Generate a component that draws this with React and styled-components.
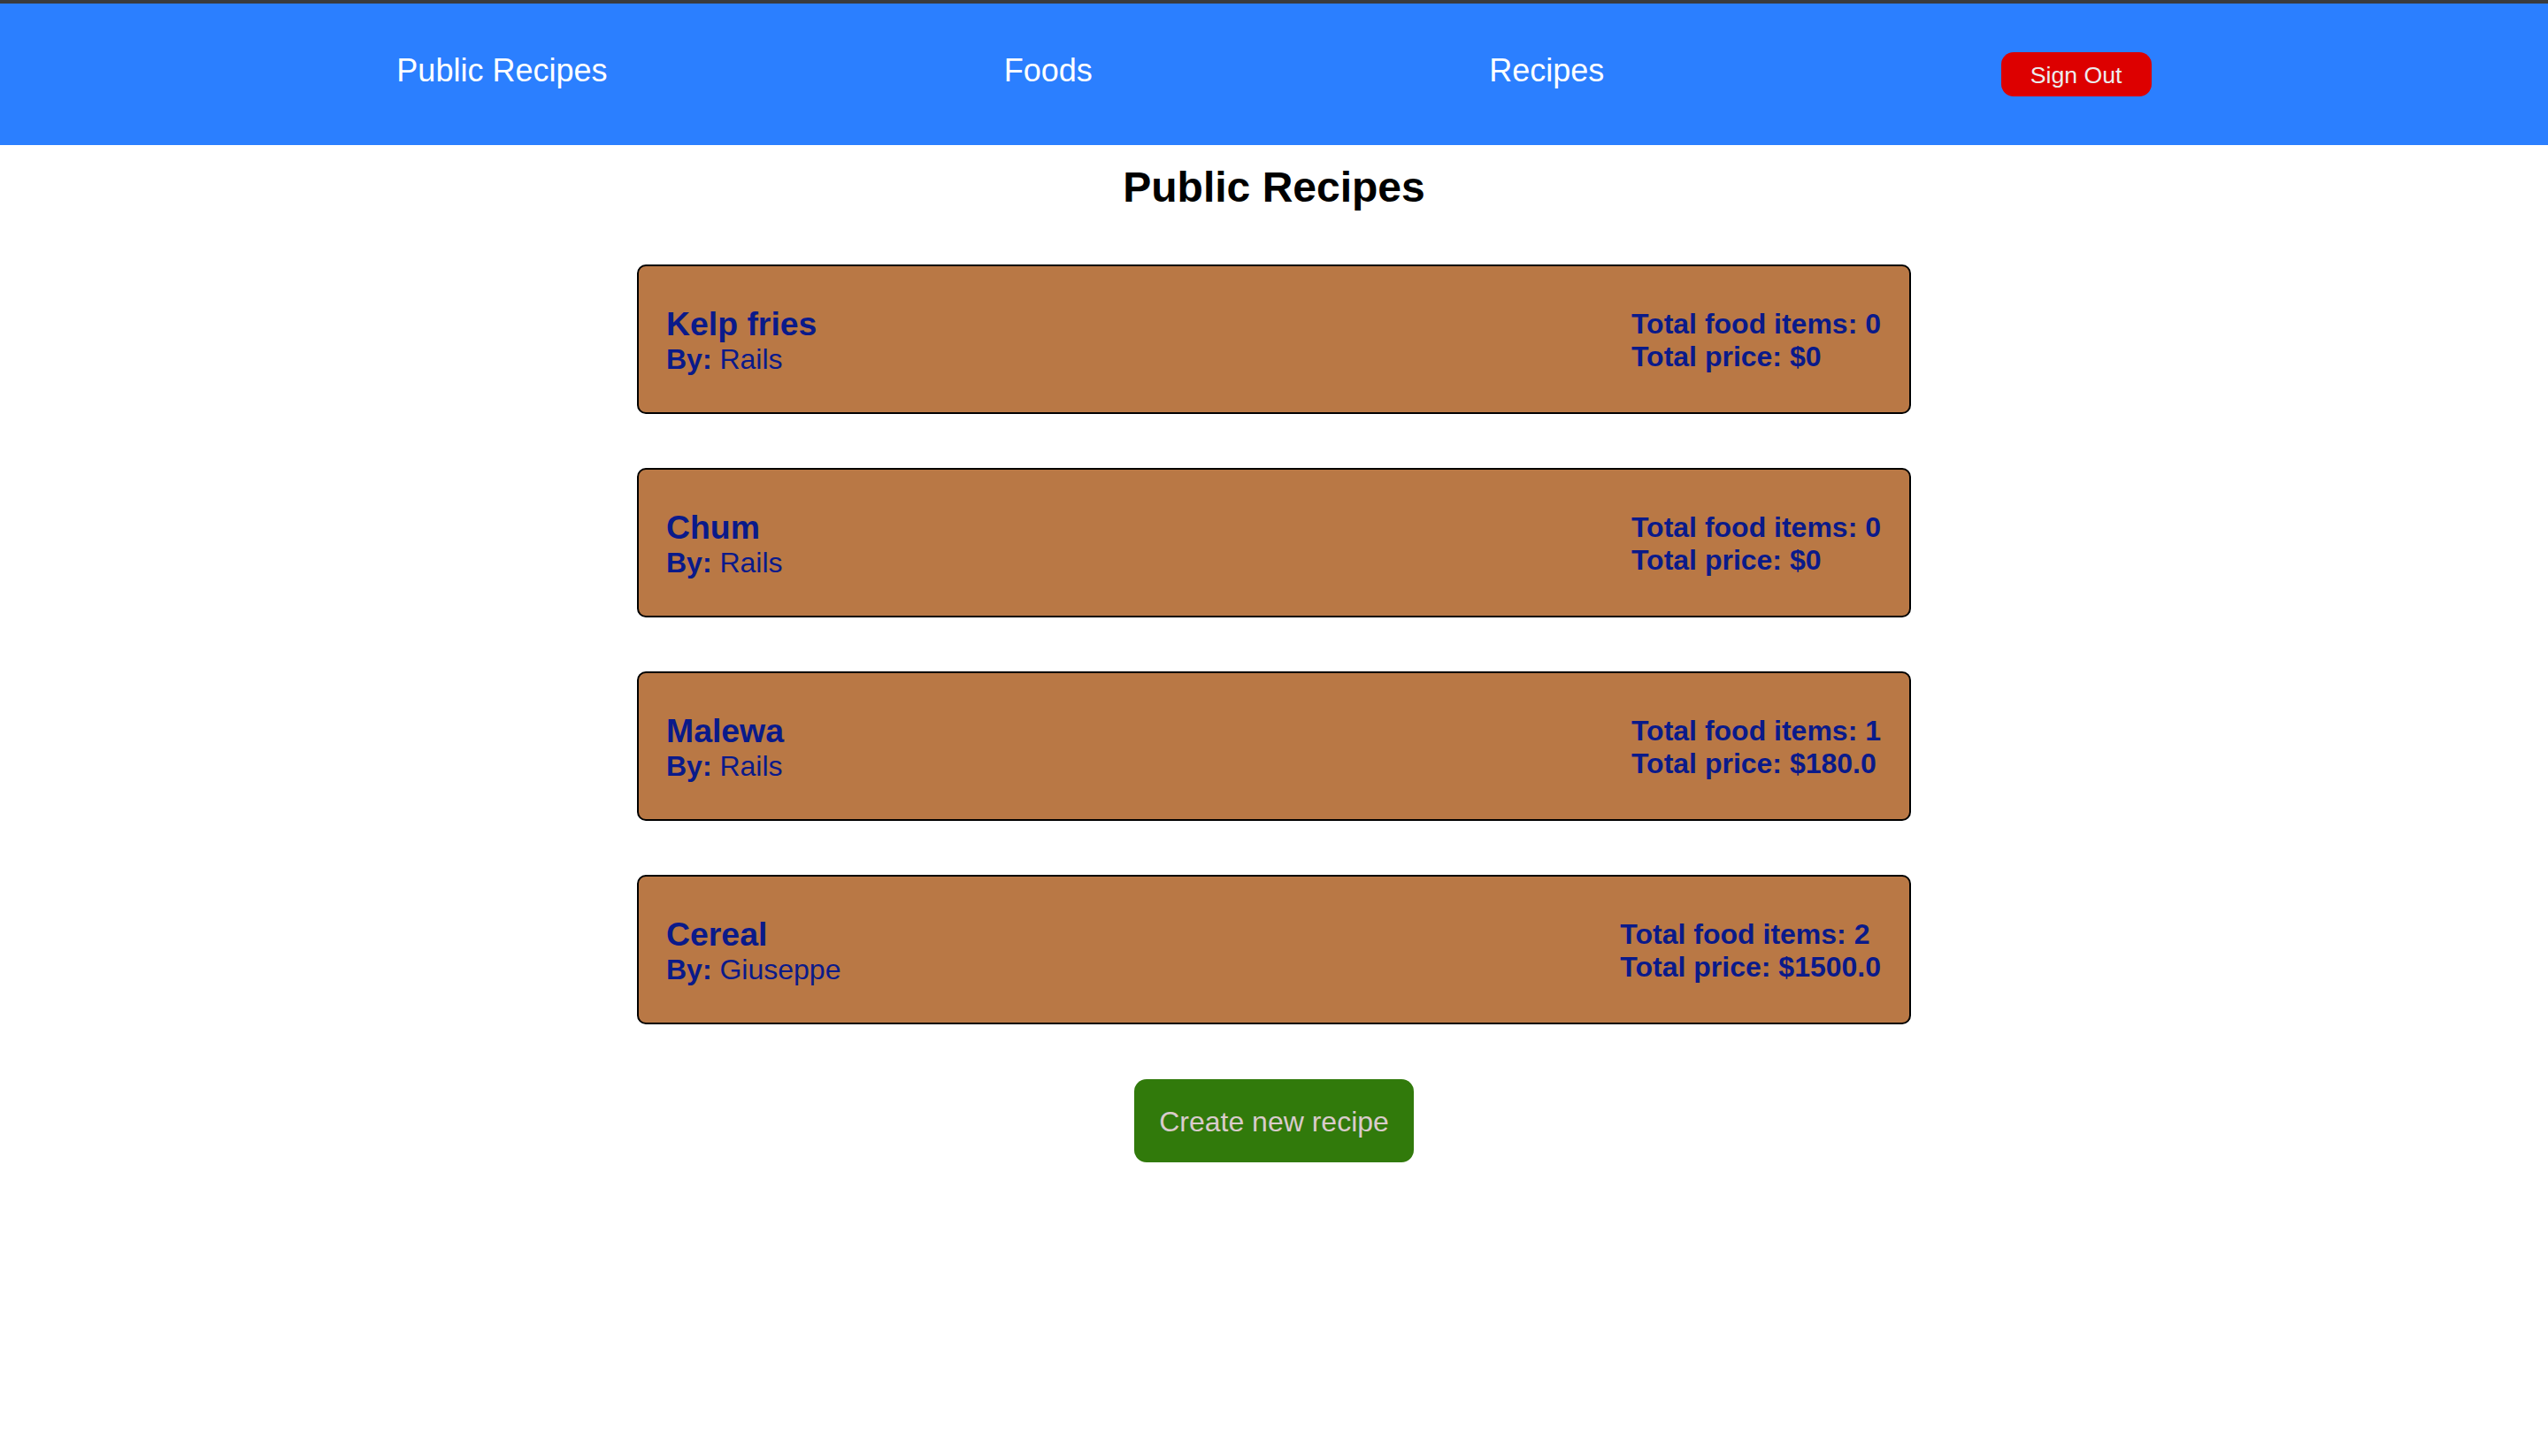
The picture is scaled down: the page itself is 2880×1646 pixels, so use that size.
import React from 'react';
import styled, { createGlobalStyle } from 'styled-components';

const GlobalStyle = createGlobalStyle`
  body {
    margin: 0;
    background: #ffffff;
    font-family: "Liberation Sans", Arial, Helvetica, sans-serif;
  }
`;

const Page = styled.div`
  min-height: 100vh;
  border-top: 4px solid #3a3b3d;
`;

const NavBar = styled.nav`
  height: 160px;
  background-color: #2b7fff;
  display: flex;
  justify-content: space-evenly;
  align-items: center;
`;

const NavLink = styled.a`
  color: #ffffff;
  font-size: 36px;
  text-decoration: none;
  padding-bottom: 8px;
  cursor: pointer;
`;

const SignOutButton = styled.button`
  background-color: #dd0000;
  color: #ececec;
  font-family: "Liberation Sans", Arial, sans-serif;
  font-size: 26.7px;
  width: 170px;
  height: 50px;
  padding-top: 3px;
  border: none;
  border-radius: 14px;
  cursor: pointer;
`;

const Main = styled.main`
  display: flex;
  flex-direction: column;
  align-items: center;
  padding-top: 20px;
`;

const Title = styled.h2`
  font-size: 48px;
  font-weight: bold;
  color: #000;
  margin: 0 0 60px;
`;

const RecipeList = styled.div`
  width: 50%;
  display: flex;
  flex-direction: column;
  gap: 61px;
`;

const RecipeCard = styled.div`
  box-sizing: border-box;
  height: 169px;
  background-color: #b97845;
  border: 2px solid #000;
  border-radius: 10px;
  padding: 2px 32px 0 31px;
  display: flex;
  justify-content: space-between;
  align-items: center;
  color: #0a1a8a;
`;

const RecipeName = styled.h3`
  font-size: 37.4px;
  font-weight: bold;
  margin: 0;
`;

const Line = styled.p`
  font-size: 32px;
  margin: 0;
  font-weight: ${props => (props.bold ? 'bold' : 'normal')};
`;

const CreateButton = styled.button`
  margin-top: 62px;
  background-color: #317a0b;
  color: #d9cbcb;
  font-family: "Liberation Sans", Arial, sans-serif;
  font-size: 32px;
  width: 316px;
  height: 94px;
  padding-top: 3px;
  border: none;
  border-radius: 14px;
  cursor: pointer;
`;

const recipes = [
  { name: 'Kelp fries', user: 'Rails', items: 0, price: '$0' },
  { name: 'Chum', user: 'Rails', items: 0, price: '$0' },
  { name: 'Malewa', user: 'Rails', items: 1, price: '$180.0' },
  { name: 'Cereal', user: 'Giuseppe', items: 2, price: '$1500.0' },
];

function Recipe({ recipe }) {
  return (
    <RecipeCard>
      <div>
        <RecipeName>{recipe.name}</RecipeName>
        <Line><b>By:</b> {recipe.user}</Line>
      </div>
      <div>
        <Line bold>Total food items: {recipe.items}</Line>
        <Line bold>Total price: {recipe.price}</Line>
      </div>
    </RecipeCard>
  );
}

export default function App() {
  return (
    <Page>
      <GlobalStyle />
      <NavBar>
        <NavLink>Public Recipes</NavLink>
        <NavLink>Foods</NavLink>
        <NavLink>Recipes</NavLink>
        <SignOutButton>Sign Out</SignOutButton>
      </NavBar>
      <Main>
        <Title>Public Recipes</Title>
        <RecipeList>
          {recipes.map(r => (
            <Recipe key={r.name} recipe={r} />
          ))}
        </RecipeList>
        <CreateButton>Create new recipe</CreateButton>
      </Main>
    </Page>
  );
}
